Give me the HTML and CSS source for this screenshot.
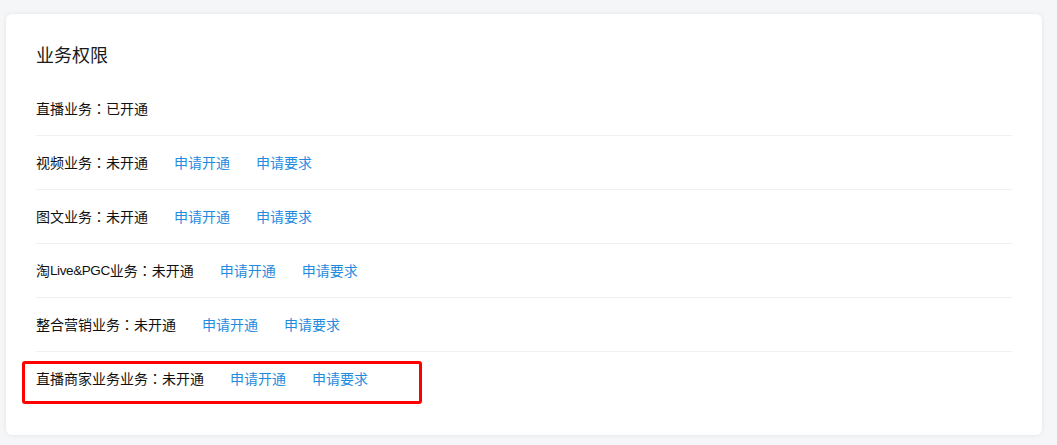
FILE: index.html
```html
<!DOCTYPE html>
<html>

<head>
    <meta charset="UTF-8">
    <meta name="viewport" content="width=device-width">
    <title>业务权限</title>
    <link rel="stylesheet" href="styles.css">
</head>

<body>
    <main class="card">
        <h2 class="card-title">业务权限</h2>
        <ul class="perm-list">
            <li class="perm-row">直播业务<span class="colon">：</span>已开通</li>
            <li class="perm-row">视频业务<span class="colon">：</span>未开通<a class="perm-link" href="#">申请开通</a><a class="perm-link" href="#">申请要求</a></li>
            <li class="perm-row">图文业务<span class="colon">：</span>未开通<a class="perm-link" href="#">申请开通</a><a class="perm-link" href="#">申请要求</a></li>
            <li class="perm-row">淘<span class="latin">Live&amp;PGC</span>业务<span class="colon">：</span>未开通<a class="perm-link" href="#">申请开通</a><a class="perm-link" href="#">申请要求</a></li>
            <li class="perm-row">整合营销业务<span class="colon">：</span>未开通<a class="perm-link" href="#">申请开通</a><a class="perm-link" href="#">申请要求</a></li>
            <li class="perm-row highlight">直播商家业务业务<span class="colon">：</span>未开通<a class="perm-link" href="#">申请开通</a><a class="perm-link" href="#">申请要求</a></li>
        </ul>
    </main>
</body>

</html>
```

FILE: styles.css
```css
*,
*::before,
*::after {
    box-sizing: border-box;
}

body {
    margin: 0;
    padding: 14px 15px 10px 6px;
    background: #f5f6f8;
    font-family: "Noto Sans CJK SC", "Noto Sans", sans-serif;
    color: #333;
}

/* La carte blanche */
.card {
    background: #fff;
    border-radius: 6px;
    box-shadow: 0 0 4px rgba(0, 0, 0, 0.08);
    padding: 30px;
    height: 421px;
}

.card-title {
    margin: 0 0 18px 0;
    font-size: 18px;
    font-weight: normal;
    line-height: 20px;
    color: #1a1a1a;
}

.perm-list {
    margin: 0;
    padding: 0;
    list-style: none;
}

.perm-row {
    display: flex;
    align-items: center;
    height: 54px;
    border-bottom: 1px solid #f0f0f0;
    font-size: 14px;
    color: #111;
    padding-bottom: 1px;
}

.perm-row:last-child {
    border-bottom: none;
    height: 53px;
}

/* Deux-points centré comme sur la capture */
.colon {
    font-family: "Noto Sans CJK TC", sans-serif;
}

/* Latin plus étroit, pour tomber sur la même largeur */
.latin {
    font-family: "Liberation Sans", sans-serif;
    font-size: 13.5px;
    letter-spacing: -0.4px;
}

.perm-link {
    margin-left: 26px;
    color: #1f8ce0;
    text-decoration: none;
}

/* Le cadre rouge d'annotation */
.highlight {
    position: relative;
}

.highlight::after {
    content: '';
    position: absolute;
    left: -14px;
    top: 9px;
    width: 400px;
    height: 43px;
    border: 3px solid #f00;
    border-radius: 3px;
}
```
